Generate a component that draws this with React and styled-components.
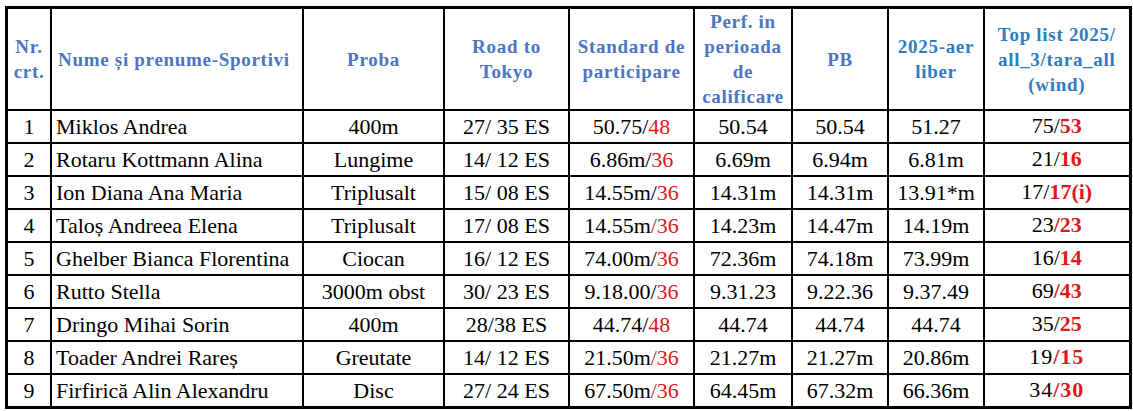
import styled, { createGlobalStyle } from "styled-components";

const GlobalStyle = createGlobalStyle`
  body {
    margin: 0;
    background: #ffffff;
    font-family: "Liberation Serif", "Times New Roman", serif;
  }
`;

const rows = [
  { nr: 1, name: "Miklos Andrea", proba: "400m", road: "27/ 35 ES", std: ["50.75/", "48"], perf: "50.54", pb: "50.54", aer: "51.27", top: ["75/", "53"] },
  { nr: 2, name: "Rotaru Kottmann Alina", proba: "Lungime", road: "14/ 12 ES", std: ["6.86m/", "36"], perf: "6.69m", pb: "6.94m", aer: "6.81m", top: ["21/", "16"] },
  { nr: 3, name: "Ion Diana Ana Maria", proba: "Triplusalt", road: "15/ 08 ES", std: ["14.55m/", "36"], perf: "14.31m", pb: "14.31m", aer: "13.91*m", top: ["17/", "17(i)"] },
  { nr: 4, name: "Taloș Andreea Elena", proba: "Triplusalt", road: "17/ 08 ES", std: ["14.55m", "/36"], perf: "14.23m", pb: "14.47m", aer: "14.19m", top: ["23", "/23"] },
  { nr: 5, name: "Ghelber Bianca Florentina", proba: "Ciocan", road: "16/ 12 ES", std: ["74.00m/", "36"], perf: "72.36m", pb: "74.18m", aer: "73.99m", top: ["16/", "14"] },
  { nr: 6, name: "Rutto Stella", proba: "3000m obst", road: "30/ 23 ES", std: ["9.18.00/", "36"], perf: "9.31.23", pb: "9.22.36", aer: "9.37.49", top: ["69", "/43"] },
  { nr: 7, name: "Dringo Mihai Sorin", proba: "400m", road: "28/38 ES", std: ["44.74/", "48"], perf: "44.74", pb: "44.74", aer: "44.74", top: ["35/", "25"] },
  { nr: 8, name: "Toader Andrei Rareș", proba: "Greutate", road: "14/ 12 ES", std: ["21.50m", "/36"], perf: "21.27m", pb: "21.27m", aer: "20.86m", top: ["19", "/15"], spaced: true },
  { nr: 9, name: "Firfirică Alin Alexandru", proba: "Disc", road: "27/ 24 ES", std: ["67.50m", "/36"], perf: "64.45m", pb: "67.32m", aer: "66.36m", top: ["34", "/30"], spaced: true },
];

const widths = [44.5, 252, 141, 125, 125, 98, 96, 96, 146];

export default function App() {
  return (
    <>
      <GlobalStyle />
      <Table>
        <colgroup>
          {widths.map((w, i) => (
            <col key={i} style={{ width: w }} />
          ))}
        </colgroup>
        <thead>
          <tr>
            <HeadCell>Nr.<br />crt.</HeadCell>
            <HeadCell $align="left">Nume și prenume-Sportivi</HeadCell>
            <HeadCell>Proba</HeadCell>
            <HeadCell>Road to<br />Tokyo</HeadCell>
            <HeadCell>Standard de<br />participare</HeadCell>
            <HeadCell>Perf. in<br />perioada<br />de<br />calificare</HeadCell>
            <HeadCell>PB</HeadCell>
            <HeadCell $teal>2025-aer<br />liber</HeadCell>
            <HeadCell $teal>Top list 2025/<br />all_3/tara_all<br />(wind)</HeadCell>
          </tr>
        </thead>
        <tbody>
          {rows.map((r) => (
            <tr key={r.nr}>
              <Cell>{r.nr}</Cell>
              <Cell $align="left">{r.name}</Cell>
              <Cell>{r.proba}</Cell>
              <Cell>{r.road}</Cell>
              <Cell>
                {r.std[0]}
                <Red>{r.std[1]}</Red>
              </Cell>
              <Cell>{r.perf}</Cell>
              <Cell>{r.pb}</Cell>
              <Cell>{r.aer}</Cell>
              <TopCell $spaced={r.spaced}>
                {r.top[0]}
                <RedBold>{r.top[1]}</RedBold>
              </TopCell>
            </tr>
          ))}
        </tbody>
      </Table>
    </>
  );
}

const Table = styled.table`
  border-collapse: collapse;
  table-layout: fixed;
  width: 1124px;
  margin: 6px 0 0 5px;
  border: 3px solid #000;
`;

const HeadCell = styled.th`
  height: 96px;
  padding: 0 2px 0 ${(p) => (p.$align === "left" ? "6px" : "2px")};
  border: 2px solid #000;
  text-align: ${(p) => p.$align || "center"};
  vertical-align: middle;
  font-family: "Liberation Serif", "Times New Roman", serif;
  font-weight: 700;
  font-size: 19px;
  line-height: 25px;
  letter-spacing: 0.7px;
  color: ${(p) => (p.$teal ? "#2f7cc0" : "#4a76c2")};
  white-space: nowrap;
`;

const Cell = styled.td`
  height: 31px;
  padding: ${(p) => (p.$align === "left" ? "0 0 0 4px" : "0 2px")};
  border: 2px solid #000;
  text-align: ${(p) => p.$align || "center"};
  vertical-align: middle;
  font-size: 22px;
  line-height: 30px;
  color: #000;
  white-space: nowrap;
`;

const TopCell = styled(Cell)`
  vertical-align: top;
  letter-spacing: ${(p) => (p.$spaced ? "1px" : "0")};
`;

const Red = styled.span`
  color: #e01818;
`;

const RedBold = styled.span`
  color: #e01818;
  font-weight: 700;
`;
